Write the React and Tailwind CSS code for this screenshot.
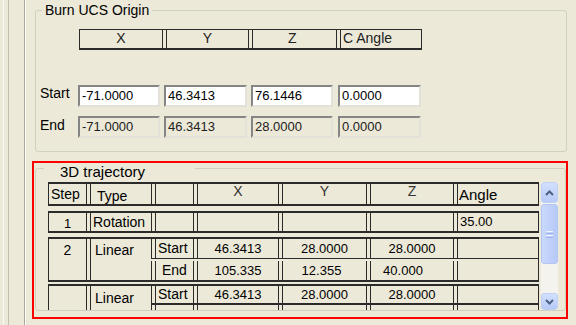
import React from "react";

const font = { fontFamily: '"Liberation Sans", Arial, sans-serif' };

function Div() {
  return <div className="w-[5px] shrink-0 self-stretch border-x border-[#2b2b2b]" />;
}

function Cell({ w, children, className = "" }) {
  return <div className={`${w} shrink-0 flex items-center ${className}`}>{children}</div>;
}

function Field({ w, value, disabled }) {
  return (
    <div
      className={`${w} h-[22px] flex items-center pl-[2px] border-2 border-t-[#858585] border-l-[#858585] border-b-[#E4E2D8] border-r-[#E4E2D8] text-[13px] ${
        disabled ? "bg-[#ECE9D8] text-[#222]" : "bg-white text-black"
      }`}
    >
      {value}
    </div>
  );
}

function SubCells({ sub, x, y, z, angle, zClass = "justify-center" }) {
  return (
    <>
      <Div />
      <Cell w="w-[37px]" className="pl-[2px]">{sub}</Cell>
      <Div />
      <Cell w="w-[80px]" className="justify-center">{x}</Cell>
      <Div />
      <Cell w="w-[83px]" className="justify-center">{y}</Cell>
      <Div />
      <Cell w="w-[82px]" className={zClass}>{z}</Cell>
      <Div />
      <Cell w="w-[80px]" className="pl-[2px]">{angle}</Cell>
    </>
  );
}

function ArrowButton({ up, h }) {
  return (
    <div
      className={`${h} flex items-center justify-center rounded-[3px] border border-[#BFD0F6] bg-gradient-to-b from-[#D3E0FD] to-[#B7CAF7]`}
    >
      <svg width="9" height="6" viewBox="0 0 9 6">
        <polyline
          points={up ? "1,5 4.5,1.5 8,5" : "1,1 4.5,4.5 8,1"}
          fill="none"
          stroke="#4D6185"
          strokeWidth="2"
        />
      </svg>
    </div>
  );
}

function Scrollbar() {
  return (
    <div className="w-[17px] h-full flex flex-col bg-[#F4F3EE]">
      <ArrowButton up h="h-[21px]" />
      <div className="mt-[1px] h-[60px] rounded-[3px] border border-[#B3C5F1] bg-gradient-to-r from-[#C9D8FC] to-[#B6C9F7] flex flex-col items-center justify-center gap-[1px]">
        <div className="w-[7px] h-[1px] bg-[#EEF3FE]" />
        <div className="w-[7px] h-[1px] bg-[#9DB5EC]" />
        <div className="w-[7px] h-[1px] bg-[#EEF3FE]" />
        <div className="w-[7px] h-[1px] bg-[#9DB5EC]" />
      </div>
      <div className="flex-1" />
      <ArrowButton h="h-[17px]" />
    </div>
  );
}

function Table() {
  return (
    <div className="w-[491px] flex flex-col text-black">
      {/* header */}
      <div className="flex h-[24px] border-y-2 border-x border-[#2b2b2b] text-[14px]">
        <Cell w="w-[37px]" className="pl-[2px] pt-[1px]">Step</Cell>
        <Div />
        <Cell w="w-[60px]" className="pl-[6px] pt-[5px]">Type</Cell>
        <Div />
        <Cell w="w-[37px]" />
        <Div />
        <Cell w="w-[80px]" className="justify-center pb-[5px] text-[#333]">X</Cell>
        <Div />
        <Cell w="w-[83px]" className="justify-center pb-[5px] text-[#333]">Y</Cell>
        <Div />
        <Cell w="w-[82px]" className="justify-center pb-[5px] text-[#333]">Z</Cell>
        <Div />
        <Cell w="w-[80px]" className="pl-[1px] pt-[2px] text-[15px]">Angle</Cell>
      </div>

      {/* row 1 */}
      <div className="mt-[5px] flex h-[22px] border-y-2 border-x border-[#2b2b2b] text-[13px]">
        <Cell w="w-[37px]" className="justify-center pt-[3px]">1</Cell>
        <Div />
        <Cell w="w-[60px]" className="pl-[2px] pt-[1px] text-[14px]">Rotation</Cell>
        <SubCells sub="" x="" y="" z="" angle="35.00" />
      </div>

      {/* row 2 */}
      <div className="mt-[4px] flex h-[45px] border-y-2 border-x border-[#2b2b2b] text-[13px]">
        <Cell w="w-[37px]" className="justify-center self-start h-[19px] pt-[3px] text-[14px]">2</Cell>
        <Div />
        <Cell w="w-[60px]" className="pl-[4px] self-start h-[19px] pt-[3px] text-[14px]">Linear</Cell>
        <div className="flex flex-col">
          <div className="flex h-[20px] border-b border-[#2b2b2b]">
            <SubCells sub={<span className="text-[14px]">Start</span>} x="46.3413" y="28.0000" z="28.0000" angle="" />
          </div>
          <div className="flex h-[21px] pt-[2px]">
            <SubCells
              sub={<span className="pl-[4px] text-[14px]">End</span>}
              x="105.335"
              y={<span className="pr-[6px]">12.355</span>}
              z={<span className="pr-[18px]">40.000</span>}
              angle=""
            />
          </div>
        </div>
      </div>

      {/* row 3 */}
      <div className="mt-[2px] flex h-[45px] border-t-2 border-x border-[#2b2b2b] text-[13px]">
        <Cell w="w-[37px]" />
        <Div />
        <Cell w="w-[60px]" className="pl-[4px] self-start h-[19px] pt-[5px] text-[14px]">Linear</Cell>
        <div className="flex flex-col">
          <div className="flex h-[19px] border-b-2 border-[#2b2b2b]">
            <SubCells sub={<span className="text-[14px]">Start</span>} x="46.3413" y="28.0000" z="28.0000" angle="" />
          </div>
          <div className="flex h-[20px]">
            <SubCells sub="" x="" y="" z="" angle="" />
          </div>
        </div>
      </div>
    </div>
  );
}

export default function App() {
  return (
    <div className="w-[576px] h-[325px] bg-[#ECE9D8] flex overflow-hidden text-black" style={font}>
      {/* left frame strip */}
      <div className="w-[9px] h-full pl-[3px] border-r border-[#C2BFAC]">
        <div className="w-[1px] h-full bg-[#FAF9F4]" />
      </div>
      <div className="w-[16px] h-full border-r border-[#ACA899]" />
      <div className="w-[1px] h-full bg-white" />

      <div className="flex flex-col">
        {/* Burn UCS Origin */}
        <fieldset className="ml-[9px] mt-[2px] w-[532px] border border-[#D0D0BF] rounded-[3px] pb-[13px]">
          <legend className="ml-[6px] px-[3px] text-[14px] leading-[16px]">Burn UCS Origin</legend>
          <div className="ml-[43px] mt-[11px] flex h-[21px] w-[343px] border border-b-2 border-[#2b2b2b] text-[14px] text-[#222]">
            <Cell w="w-[82px]" className="justify-center pb-[2px]">X</Cell>
            <Div />
            <Cell w="w-[81px]" className="justify-center pb-[2px]">Y</Cell>
            <Div />
            <Cell w="w-[83px]" className="pl-[35px] pb-[2px]">Z</Cell>
            <Div />
            <Cell w="w-[80px]" className="pl-[2px] pb-[2px]">C Angle</Cell>
          </div>

          <div className="mt-[35px] flex items-start">
            <div className="w-[42px] pl-[4px] text-[14px] leading-[16px] mt-[0px]">Start</div>
            <div className="flex">
              <Field w="w-[82px]" value="-71.0000" />
              <div className="w-[4px]" />
              <Field w="w-[83px]" value="46.3413" />
              <div className="w-[4px]" />
              <Field w="w-[82px]" value="76.1446" />
              <div className="w-[5px]" />
              <Field w="w-[83px]" value="0.0000" />
            </div>
          </div>
          <div className="mt-[9px] flex items-start">
            <div className="w-[42px] pl-[4px] text-[14px] leading-[16px] mt-[1px]">End</div>
            <div className="flex">
              <Field w="w-[82px]" value="-71.0000" disabled />
              <div className="w-[4px]" />
              <Field w="w-[83px]" value="46.3413" disabled />
              <div className="w-[4px]" />
              <Field w="w-[82px]" value="28.0000" disabled />
              <div className="w-[5px]" />
              <Field w="w-[83px]" value="0.0000" disabled />
            </div>
          </div>
        </fieldset>

        {/* 3D trajectory, highlighted */}
        <div className="ml-[6px] mt-[9px] w-[536px] h-[158px] border-2 border-[#FF0000]">
          <fieldset className="ml-[1px] w-[531px] border border-[#D0D0BF] rounded-[3px]">
            <legend className="ml-[8px] pl-[16px] pr-[50px] h-[10px] text-[15px] leading-[18px]">3D trajectory</legend>
            <div className="mt-[9px] ml-[12px] flex h-[128px] overflow-hidden gap-[2px]">
              <Table />
              <Scrollbar />
            </div>
          </fieldset>
        </div>
      </div>
    </div>
  );
}
